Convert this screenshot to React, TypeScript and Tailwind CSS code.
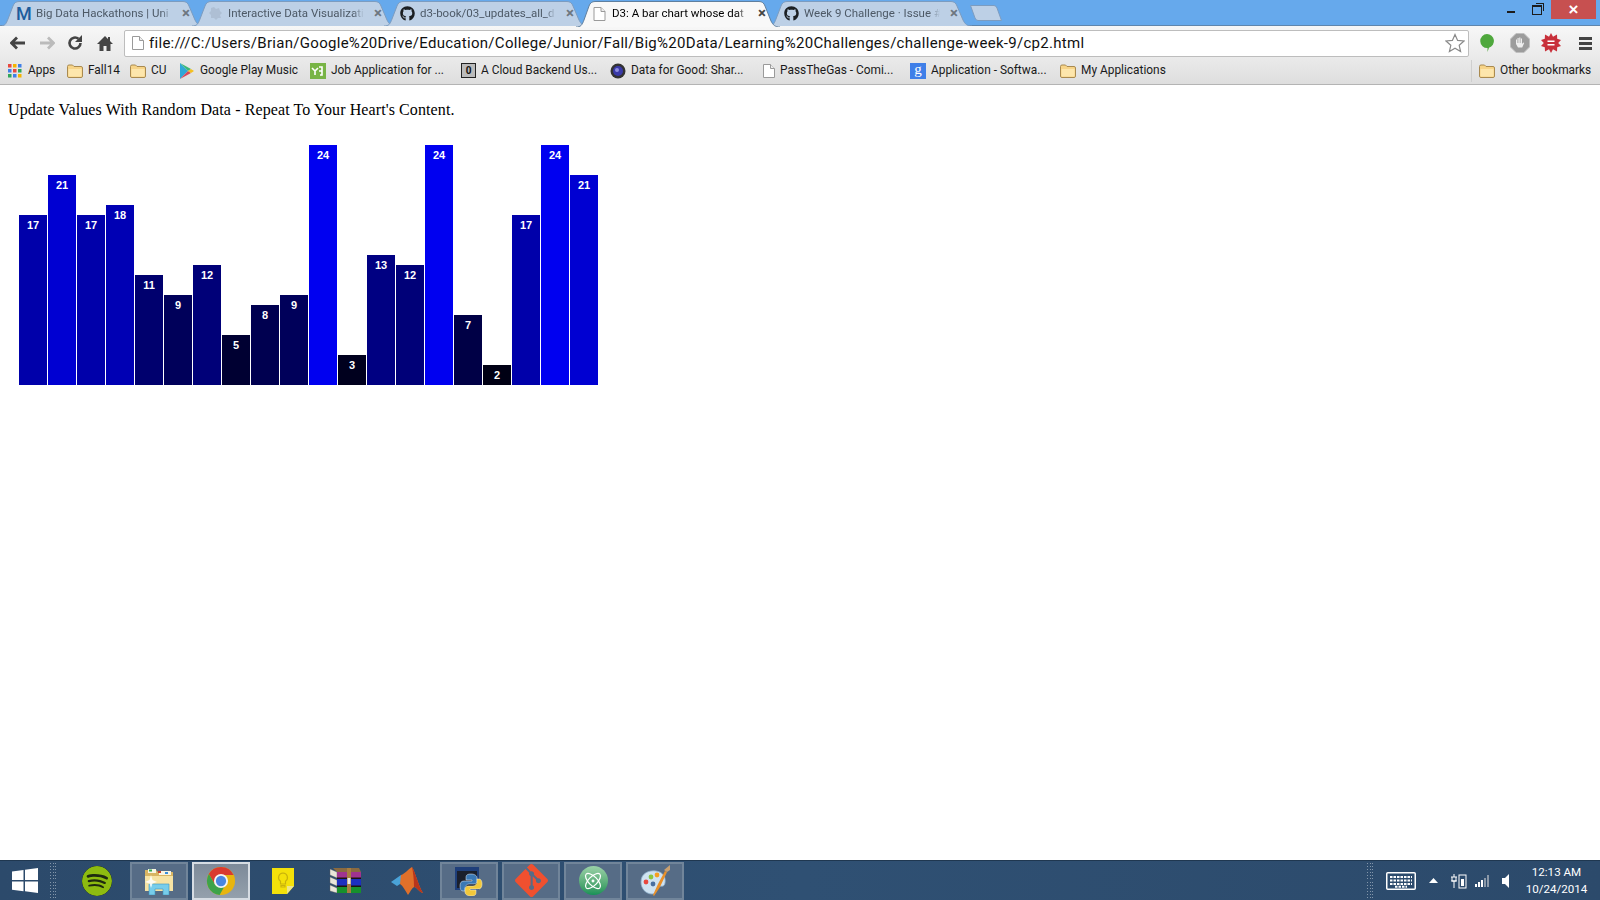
import { ReactNode } from 'react'
import { Atom } from 'lucide-react'
import { FaGithub } from 'react-icons/fa'
import { SiSpotify, SiGit } from 'react-icons/si'

const data = [17, 21, 17, 18, 11, 9, 12, 5, 8, 9, 24, 3, 13, 12, 24, 7, 2, 17, 24, 21]

const DocIcon = ({ className = '' }: { className?: string }) => (
    <svg viewBox="0 0 12 14" className={className}>
        <path d="M.5.5h7l4 4v9H.5z" fill="#fff" stroke="#9a9a9a" />
        <path d="M7.5.5v4h4" fill="#eee" stroke="#9a9a9a" />
    </svg>
)

const FolderIcon = () => (
    <svg viewBox="0 0 16 14" className="h-[14px] w-4 shrink-0">
        <path d="M.5 2.5q0-1.500 1.500-1.500h3.500l1.500 1.500h7q1.500 0 1.500 1.500v8q0 1.500-1.500 1.500H2q-1.500 0-1.500-1.500z" fill="#f7d488" stroke="#a98a50" />
        <path d="M1.500 5h13v7.500h-13z" fill="#fde6ac" />
    </svg>
)

const GithubFav = () => <FaGithub className="h-[15px] w-[15px] shrink-0 text-[#1b1f23]" />

const tabs: { title: string; icon: ReactNode; active?: boolean }[] = [
    { title: 'Big Data Hackathons | Uni', icon: <span className="w-[15px] shrink-0 text-[18px] leading-none font-medium text-[#1d5c9c]">M</span> },
    {
        title: 'Interactive Data Visualizati',
        icon: (
            <svg viewBox="0 0 15 15" className="h-[15px] w-[15px] shrink-0">
                <path d="M6 1l2 2 3-1 1 3 2 2-2 2 1 3-3 0-2 2-2-2-3 0 0-3-2-2 2-2 0-3z" fill="#aebfd4" />
            </svg>
        ),
    },
    { title: 'd3-book/03_updates_all_d', icon: <GithubFav /> },
    { title: 'D3: A bar chart whose dat', icon: <DocIcon className="h-[14px] w-[15px] shrink-0" />, active: true },
    { title: 'Week 9 Challenge · Issue #', icon: <GithubFav /> },
]

const Tab = ({ title, icon, active }: { title: string; icon: ReactNode; active?: boolean }) => {
    const b = active ? 26 : 25
    return (
        <div className={`relative -mr-3 flex h-[25px] w-[204px] shrink-0 items-center pr-[14px] pl-4 ${active ? 'z-10 text-black' : 'text-[#4d5966]'}`}>
            <svg viewBox={`0 0 204 ${b}`} className={`absolute top-0 left-0 w-[204px] ${active ? 'h-[26px]' : 'h-[25px]'}`}>
                <path
                    d={`M0 ${b}C5 ${b} 6 ${b - 2} 8 ${b - 7}L13 5C14 2 16 .5 19 .5H183C186 .5 188 2 189 5L195 ${b - 6}C197 ${b - 2} 199 ${b} 204 ${b}`}
                    fill={active ? '#f8f8f8' : '#bdd0e6'}
                    stroke={active ? '#5f7f9f' : '#7c9cc0'}
                />
            </svg>
            <div className="relative flex w-full items-center">
                {icon}
                <span className="ml-[5px] w-[136px] overflow-hidden text-[11.5px] whitespace-nowrap [mask-image:linear-gradient(to_right,black_92%,transparent)]">{title}</span>
                <span className={`ml-auto text-[15px] leading-none font-bold ${active ? 'text-[#444]' : 'text-[#6d7680]'}`}>×</span>
            </div>
        </div>
    )
}

const Bookmark = ({ icon, label, width }: { icon: ReactNode; label: string; width: string }) => (
    <div className={`flex shrink-0 items-center gap-[5px] ${width}`}>
        {icon}
        <span className="whitespace-nowrap">{label}</span>
    </div>
)

const AppsIcon = () => (
    <svg viewBox="0 0 14 14" className="mr-px h-[14px] w-[14px] shrink-0">
        {['#e8483f', '#f4b400', '#3f7fe8', '#3f7fe8', '#e8483f', '#2fa65a', '#2fa65a', '#3f7fe8', '#f4b400'].map((c, i) => (
            <rect key={i} x={(i % 3) * 5} y={Math.floor(i / 3) * 5} width="3.500" height="3.500" fill={c} />
        ))}
    </svg>
)

const Tile = ({ children, kind }: { children: ReactNode; kind?: 'open' | 'active' }) => (
    <div
        className={`flex h-[38px] w-[58px] shrink-0 items-center justify-center ${
            kind === 'active'
                ? 'border-2 border-[#d6dce3] bg-gradient-to-b from-[#7d8a99] to-[#94a0ac]'
                : kind === 'open'
                  ? 'border-2 border-[#71859a] bg-[#566c86]'
                  : ''
        }`}
    >
        {children}
    </div>
)

const Grip = () => (
    <div className="grid h-[36px] w-2 shrink-0 grid-cols-3 content-between">
        {Array.from({ length: 36 }).map((_, i) => (
            <span key={i} className="h-px w-px bg-[#8396aa]" />
        ))}
    </div>
)

const App = () => {
    return (
        <div className="flex h-[900px] w-[1600px] flex-col overflow-hidden bg-white font-['Roboto',sans-serif]">
            {/* tab strip */}
            <div className="flex h-[26px] shrink-0 items-start border-b border-[#5f86ad] bg-[#66a9ec]">
                <div className="mt-px flex">
                    {tabs.map((t) => (
                        <Tab key={t.title} {...t} />
                    ))}
                </div>
                <svg viewBox="0 0 32 16" className="mt-[5px] ml-[10px] h-4 w-8">
                    <path d="M.5.5H24Q26 .5 27 3L31.500 15.500H8Q6 15.500 5 13z" fill="#bdd0e6" stroke="#7c9cc0" />
                </svg>
                <div className="ml-auto flex h-[19px] items-center">
                    <span className="mt-1 h-[2px] w-2 bg-[#1c1c1c]" />
                    <span className="relative mr-[9px] ml-[17px] h-[10px] w-[10px] border border-t-2 border-[#1c1c1c] before:absolute before:-top-[4px] before:-right-[3px] before:h-[8px] before:w-[8px] before:border before:border-b-0 before:border-l-0 before:border-[#1c1c1c]" />
                    <div className="mr-1 flex h-[19px] w-[45px] items-center justify-center bg-[#c75050] font-['Liberation_Sans',sans-serif] text-[17px] leading-none font-bold text-white">×</div>
                </div>
            </div>

            {/* toolbar */}
            <div className="flex h-[32px] shrink-0 items-center bg-gradient-to-b from-[#f7f7f7] to-[#eaeaea] pt-[2px]">
                <div className="flex w-[124px] shrink-0 items-center pl-[10px]">
                    <svg viewBox="0 0 16 14" className="h-[14px] w-4 text-[#444]">
                        <path d="M1 7h14M7 1.500 1.500 7 7 12.500" fill="none" stroke="currentColor" strokeWidth="2.800" />
                    </svg>
                    <svg viewBox="0 0 16 14" className="ml-[13px] h-[14px] w-4 text-[#bbb]">
                        <path d="M15 7H1M9 1.500 14.500 7 9 12.500" fill="none" stroke="currentColor" strokeWidth="2.800" />
                    </svg>
                    <svg viewBox="0 0 16 16" className="ml-[12px] h-4 w-4 text-[#444]">
                        <path d="M13.500 8A5.500 5.500 0 1 1 11.500 3.800" fill="none" stroke="currentColor" strokeWidth="2.600" />
                        <path d="M15 0v7H8z" fill="currentColor" />
                    </svg>
                    <svg viewBox="0 0 16 15" className="ml-[14px] h-[15px] w-4 text-[#444]">
                        <path d="M8 0 0 8h2.500v7h4v-5h3v5h4V8H16l-3-3V1h-2v2z" fill="currentColor" />
                    </svg>
                </div>
                <div className="flex h-[27px] w-[1345px] shrink-0 items-center rounded-[2px] border border-[#bdbdbd] bg-white pr-[2px] pl-[7px]">
                    <DocIcon className="h-[14px] w-3" />
                    <span className="ml-[5px] text-[15px] tracking-[.29px] whitespace-nowrap text-[#111]">
                        file:///C:/Users/Brian/Google%20Drive/Education/College/Junior/Fall/Big%20Data/Learning%20Challenges/challenge-week-9/cp2.html
                    </span>
                    <svg viewBox="0 0 20 20" className="mr-px ml-auto h-5 w-5">
                        <path d="M10 1.500 12.600 7.400 19 8 14.200 12.300 15.600 18.600 10 15.300 4.400 18.600 5.800 12.300 1 8 7.400 7.400z" fill="#fff" stroke="#8a8a8a" strokeWidth="1.200" />
                    </svg>
                </div>
                <div className="flex flex-1 items-center pl-[10px]">
                    <svg viewBox="0 0 16 20" className="h-5 w-4">
                        <path d="M8 1a7 7 0 0 1 2 13.700L8.500 19v-4A7 7 0 0 1 8 1z" fill="#4fa83d" />
                    </svg>
                    <svg viewBox="0 0 20 20" className="ml-[15px] h-5 w-5">
                        <path d="M6 .5h8L19.500 6v8L14 19.500H6L.5 14V6z" fill="#9c9c9c" stroke="#c0c0c0" />
                        <path d="M6 11V6.500h1V10h.500V5h1.200v5h.500V4.500h1.200V10h.500V5.500h1.100V11l1.200-1.500 1 .500-2 4.500H8z" fill="#eee" />
                    </svg>
                    <svg viewBox="0 0 20 20" className="ml-[11px] h-5 w-5">
                        <path d="M10 0l2 3.800L16 1.500l.2 4.300L20 7l-2.800 3 2.800 3-3.800 1.200-.2 4.300-4-2.300L10 20l-2-3.800-4 2.300-.2-4.300L0 13l2.800-3L0 7l3.800-1.200L4 1.500l4 2.300z" fill="#c8303a" />
                        <path d="M6.500 7.500h7v1.500h-7zM6.500 11h7v1.500h-7z" fill="#fff" />
                    </svg>
                    <div className="ml-[18px] flex w-[13px] flex-col gap-[2px]">
                        <span className="h-[3px] bg-[#444]" />
                        <span className="h-[3px] bg-[#444]" />
                        <span className="h-[3px] bg-[#444]" />
                    </div>
                </div>
            </div>

            {/* bookmarks bar */}
            <div className="flex h-[27px] shrink-0 items-center border-b border-[#b4b4b4] bg-gradient-to-b from-[#eaeaea] to-[#dedede] pl-2 text-[11.9px] text-[#1a1a1a]">
                <Bookmark width="w-[59px]" icon={<AppsIcon />} label="Apps" />
                <Bookmark width="w-[63px]" icon={<FolderIcon />} label="Fall14" />
                <Bookmark width="w-[50px]" icon={<FolderIcon />} label="CU" />
                <Bookmark
                    width="w-[130px]"
                    icon={
                        <svg viewBox="0 0 14 16" className="mr-px h-4 w-[14px] shrink-0">
                            <path d="M0 0 8 8 0 16z" fill="#2fa8d8" />
                            <path d="M0 0 11 6 8 8z" fill="#3cb878" />
                            <path d="M0 16 11 10 8 8z" fill="#d8485a" />
                            <path d="M11 6 14 8 11 10 8 8z" fill="#f4c020" />
                        </svg>
                    }
                    label="Google Play Music"
                />
                <Bookmark
                    width="w-[151px]"
                    icon={
                        <svg viewBox="0 0 16 16" className="h-4 w-4 shrink-0">
                            <rect width="16" height="16" fill="#78b445" />
                            <path d="M2 5l3 3v4M5 8l3-3M9 4h3v8h-2M12 8H9" fill="none" stroke="#fff" strokeWidth="1.600" />
                        </svg>
                    }
                    label="Job Application for ..."
                />
                <Bookmark
                    width="w-[149px]"
                    icon={
                        <span className="flex h-[15px] w-[15px] shrink-0 items-center justify-center border border-[#222] bg-[#bbb] text-[10px] leading-none font-bold text-[#111]">0</span>
                    }
                    label="A Cloud Backend Us..."
                />
                <Bookmark
                    width="w-[153px]"
                    icon={
                        <svg viewBox="0 0 16 16" className="h-4 w-4 shrink-0">
                            <circle cx="8" cy="8" r="7.500" fill="#333" />
                            <circle cx="8" cy="8" r="5" fill="#3a3aa8" />
                            <circle cx="7" cy="7" r="2" fill="#8d8de0" />
                        </svg>
                    }
                    label="Data for Good: Shar..."
                />
                <Bookmark width="w-[147px]" icon={<DocIcon className="h-[14px] w-3 shrink-0" />} label="PassTheGas - Comi..." />
                <Bookmark
                    width="w-[150px]"
                    icon={
                        <span className="flex h-4 w-4 shrink-0 items-center justify-center bg-[#3f7fe8] pb-[3px] font-['Liberation_Serif',serif] text-[15px] leading-none text-white">g</span>
                    }
                    label="Application - Softwa..."
                />
                <Bookmark width="w-[411px]" icon={<FolderIcon />} label="My Applications" />
                <span className="mr-[7px] h-[22px] w-px bg-[#cfcfcf]" />
                <Bookmark width="w-[113px]" icon={<FolderIcon />} label="Other bookmarks" />
            </div>

            {/* page */}
            <div className="flex-1 px-2 pt-[16px] font-['Liberation_Serif',serif] text-[16px] leading-[18px] tracking-[.1px] text-black">
                <p>Update Values With Random Data - Repeat To Your Heart's Content.</p>
                <div className="mt-[26px] ml-[11px] flex h-[240px] items-end gap-px">
                    {data.map((d, i) => (
                        <div
                            key={i}
                            className="w-7 pt-[5px] text-center font-['Liberation_Sans',sans-serif] text-[11px] leading-[11px] font-bold tracking-normal text-white"
                            style={{ height: d * 10, backgroundColor: `rgb(0,0,${d * 10})` }}
                        >
                            {d}
                        </div>
                    ))}
                </div>
            </div>

            {/* taskbar */}
            <div className="flex h-10 shrink-0 items-center border-t border-[#1f3750] bg-gradient-to-r from-[#2c4a6b] via-[#2f5073] to-[#2c4a6b] text-white">
                <div className="flex w-[50px] shrink-0 justify-center">
                    <svg viewBox="0 0 26 25" className="h-[25px] w-[26px]">
                        <path d="M0 3.500 11.500 2v10H0zM13 1.800 26 0v12H13zM0 13.500h11.500v9.800L0 21.800zM13 13.500h13V25l-13-1.800z" fill="#fff" />
                    </svg>
                </div>
                <Grip />
                <div className="ml-[10px] flex gap-1">
                    <Tile>
                        <SiSpotify className="h-[30px] w-[30px] rounded-full bg-[#1f2a10] text-[#8dbb10]" />
                    </Tile>
                    <Tile kind="open">
                        <svg viewBox="0 0 30 28" className="h-7 w-[30px]">
                            <path d="M1 3h11l2 2h15v10H1z" fill="#d8b562" />
                            <path d="M4 2h8v4H4zM15 4h12v4H15z" fill="#f8f4e2" />
                            <path d="M5 2.500h3v2H5z" fill="#2fa84f" />
                            <path d="M14 4h3v2h-3z" fill="#c8402f" />
                            <path d="M21 5h3v2h-3z" fill="#3a8ed8" />
                            <path d="M1 9h28v15H1z" fill="#f6e3a4" />
                            <path d="M5 17h20v11h-6v-6h-8v6H5z" fill="#77cdeb" stroke="#3d95bf" strokeWidth=".6" />
                            <path d="M7 8l1.500 5L13 15l-4.500 1.500L7 21l-1.500-4.500L1 15l4.500-2z" fill="#fff" opacity=".85" />
                        </svg>
                    </Tile>
                    <Tile kind="active">
                        <svg viewBox="0 0 32 32" className="h-[30px] w-[30px]">
                            <circle cx="16" cy="16" r="15" fill="#e8b50f" />
                            <path d="M16 1A15 15 0 0 0 3 8.500L9.500 19.500 16 9.500H29.500A15 15 0 0 0 16 1z" fill="#d93a2f" />
                            <path d="M3 8.500A15 15 0 0 0 14.500 31L21 19.500 9.500 19.500z" fill="#3da34a" />
                            <circle cx="16" cy="16" r="7.500" fill="#f4f4f4" />
                            <circle cx="16" cy="16" r="5.500" fill="#4a86e0" />
                        </svg>
                    </Tile>
                    <Tile>
                        <svg viewBox="0 0 24 26" className="h-[26px] w-6">
                            <path d="M1 0h22v18l-7 8H1z" fill="#f4e10a" />
                            <path d="M23 18h-7v8z" fill="#ece58a" />
                            <path d="M12 5a4.500 4.500 0 0 1 2.500 8.200V16h-5v-2.800A4.500 4.500 0 0 1 12 5zM10 17.500h4V19h-4z" fill="none" stroke="#c9b30c" strokeWidth="1.200" />
                        </svg>
                    </Tile>
                    <Tile>
                        <svg viewBox="0 0 32 25" className="h-[25px] w-8">
                            <path d="M4 0h26l2 4H8z" fill="#8a6a40" />
                            <path d="M1 1l7 3v6L1 7zM1 9l7 3v6L1 15zM1 17l7 3v5L1 23z" fill="#e9e6da" stroke="#555" strokeWidth=".4" />
                            <path d="M8 4h24v6H8z" fill="#a0338f" />
                            <path d="M8 11h24v7H8z" fill="#1c2fc0" />
                            <path d="M8 19h24v6H8z" fill="#17902c" />
                            <path d="M8 9.500h24v1.500H8zM8 17.500h24v1.500H8z" fill="#1c1410" />
                            <path d="M18 0h4v25h-4z" fill="#a87d3f" />
                            <rect x="18.500" y="10" width="3" height="6" fill="#e8e8e8" />
                        </svg>
                    </Tile>
                    <Tile>
                        <svg viewBox="0 0 32 28" className="h-7 w-8">
                            <path d="M0 15 10 8 15 11 9 17 6 19z" fill="#4aa3d8" />
                            <path d="M10 8C14 7 17 2 21 0C24 4 27 18 32 26 28 25 26 20 23 20 21 21 19 25 17 28 14 23 12 19 9 17z" fill="#e0702a" />
                            <path d="M21 0C24 4 27 18 32 26 28 25 26 20 23 20 23 12 22 5 21 0z" fill="#b8351c" />
                        </svg>
                    </Tile>
                    <Tile kind="open">
                        <svg viewBox="0 0 30 30" className="h-[30px] w-[30px]">
                            <rect x="1" y="1" width="24" height="23" fill="#1f3f7a" />
                            <rect x="3" y="5" width="20" height="17" fill="#1a1f2c" />
                            <path d="M17 8c-5 0-5 2-5 4v2h6v1h-8c-3 0-4 2-4 5s1 5 3 5h2v-3c0-2 2-4 4-4h5c2 0 3-2 3-3v-3c0-2-2-4-6-4z" fill="#3a78b5" stroke="#e8eef5" strokeWidth=".5" />
                            <path d="M17 30c5 0 5-2 5-4v-2h-6v-1h8c3 0 4-2 4-5s-1-5-3-5h-2v3c0 2-2 4-4 4h-5c-2 0-3 2-3 3v3c0 2 2 4 6 4z" fill="#f2c83a" stroke="#f8f3d8" strokeWidth=".5" />
                        </svg>
                    </Tile>
                    <Tile kind="open">
                        <SiGit className="h-[33px] w-[33px] text-[#f0502f]" />
                    </Tile>
                    <Tile kind="open">
                        <span className="flex h-[29px] w-[29px] items-center justify-center rounded-full bg-gradient-to-b from-[#9ad2a8] to-[#149257]">
                            <Atom className="h-5 w-5 text-white" strokeWidth={1.5} />
                        </span>
                    </Tile>
                    <Tile kind="open">
                        <svg viewBox="0 0 32 32" className="h-8 w-8">
                            <path d="M2 17C2 8 10 5 17 6c7 1 10 6 9 12-1 5-4 2-7 4-3 2 0 7-6 7C7 29 2 24 2 17z" fill="#cfe3f2" stroke="#8fb0cc" strokeWidth=".8" />
                            <circle cx="7" cy="17" r="2.400" fill="#e8483f" />
                            <circle cx="12" cy="12" r="2.400" fill="#8cc63f" />
                            <circle cx="18" cy="10" r="2.400" fill="#f4a020" />
                            <circle cx="14" cy="19" r="2.400" fill="#4a6fa0" />
                            <path d="M26 6 28 7 21 22 15 31 14 30 19 19z" fill="#e8902a" />
                            <path d="M25 5 31 0 31 5 28 7z" fill="#c9a070" />
                        </svg>
                    </Tile>
                </div>

                {/* tray */}
                <div className="ml-auto flex items-center">
                    <Grip />
                    <svg viewBox="0 0 30 18" className="ml-[11px] h-[18px] w-[30px]">
                        <rect x=".75" y=".75" width="28.500" height="16.500" rx="1" fill="none" stroke="#fff" strokeWidth="1.500" />
                        <path d="M4 5h22M4 8.500h22M4 12h22M9 14.800h12" stroke="#fff" strokeWidth="2" strokeDasharray="2.500 1" fill="none" />
                    </svg>
                    <svg viewBox="0 0 9 5" className="ml-[13px] h-[5px] w-[9px]">
                        <path d="M4.500 0 9 5H0z" fill="#fff" />
                    </svg>
                    <svg viewBox="0 0 16 16" className="ml-[13px] h-4 w-4">
                        <path d="M0 4h6M0 8h6M3 1v3M1 4v4h4V4M3 8v7" stroke="#fff" fill="none" />
                        <rect x="8" y="2" width="7" height="13" fill="none" stroke="#fff" />
                        <rect x="10" y="6" width="3" height="7" fill="#fff" />
                    </svg>
                    <svg viewBox="0 0 16 13" className="ml-[7px] h-[13px] w-4">
                        <path d="M1 10h2v3H1zM4 8h2v5H4zM7 6h2v7H7z" fill="#fff" />
                        <path d="M10 4h2v9h-2zM13 1h2v12h-2z" fill="#8a98a8" />
                    </svg>
                    <svg viewBox="0 0 8 14" className="ml-[12px] h-[14px] w-2">
                        <path d="M0 4h3l4-4v14l-4-4H0z" fill="#fff" />
                    </svg>
                    <div className="mr-[15px] ml-[18px] flex w-[57px] flex-col items-center text-[11.6px] leading-[17px] text-white">
                        <span>12:13 AM</span>
                        <span>10/24/2014</span>
                    </div>
                </div>
            </div>
        </div>
    )
}

export default App
